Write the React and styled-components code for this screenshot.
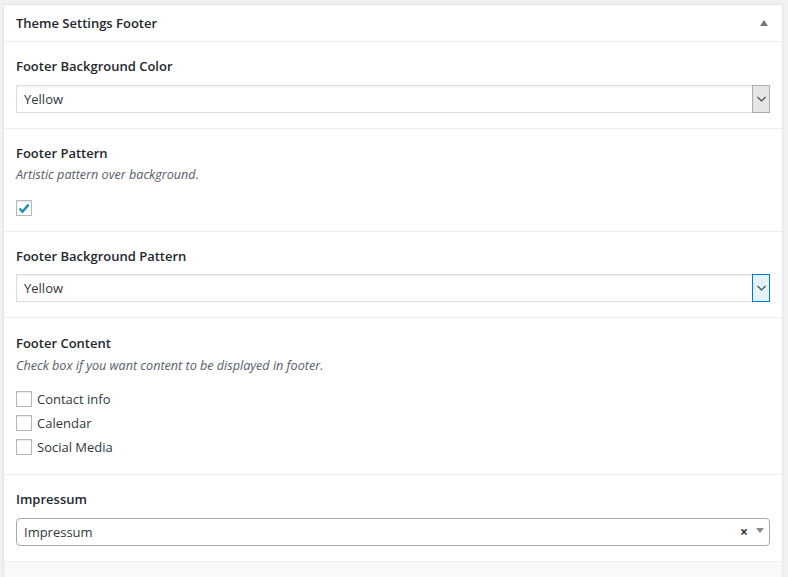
import React from "react";
import styled, { createGlobalStyle } from "styled-components";

const Global = createGlobalStyle`
  html, body { margin: 0; padding: 0; background: #f1f1f1; }
  body { font-family: "Open Sans", "Noto Sans", sans-serif; color: #23282d; }
  * { box-sizing: border-box; }
`;

const Page = styled.div`
  padding: 4px 5px 0 3px;
  height: 577px;
  overflow: hidden;
`;

const Panel = styled.div`
  background: #fff;
  border: 1px solid #e5e5e5;
  border-bottom: none;
  box-shadow: 0 1px 1px rgba(0,0,0,0.04);
`;

const Header = styled.div`
  height: 37px;
  display: flex;
  align-items: center;
  justify-content: space-between;
  padding: 0 14px 0 12px;
  border-bottom: 1px solid #eee;
`;

const Title = styled.h2`
  margin: 0;
  font-size: 13px;
  font-weight: 600;
  line-height: 20px;
  color: #23282d;
`;

const Toggle = styled.span`
  width: 0;
  height: 0;
  border-left: 4px solid transparent;
  border-right: 4px solid transparent;
  border-bottom: 6px solid #72777c;
`;

const Section = styled.div`
  padding: ${p => p.$pad || "14px 12px 15px 12px"};
  border-bottom: 1px solid #eee;
  display: flex;
  flex-direction: column;
`;

const Label = styled.div`
  font-size: 13px;
  font-weight: 600;
  line-height: 20px;
`;

const Desc = styled.div`
  font-size: 12.6px;
  font-style: italic;
  color: #555d66;
  line-height: 20px;
  margin-top: ${p => p.$mt || 2}px;
`;

const SelectBox = styled.div`
  margin-top: ${p => p.$mt || 9}px;
  height: 28px;
  border: 1px solid #ddd;
  box-shadow: inset 0 1px 2px rgba(0,0,0,0.07);
  display: flex;
  align-items: stretch;
  font-size: 13px;
`;

const SelectValue = styled.div`
  flex: 1;
  display: flex;
  align-items: center;
  padding-left: ${p => (p.$flush ? 0 : 7)}px;
  color: #32373c;
`;

const SelectButton = styled.div`
  width: 18px;
  margin: -1px -1px -1px 0;
  display: flex;
  align-items: center;
  justify-content: center;
  background: ${p => (p.$focus ? "#e5f1fb" : "#e6e6e6")};
  border: 1px solid ${p => (p.$focus ? "#0078d7" : "#adadad")};
`;

const Chevron = () => (
  <svg width="9" height="6" viewBox="0 0 9 6">
    <path d="M0.5 1 L4.5 5 L8.5 1" fill="none" stroke="#444" strokeWidth="1.1" />
  </svg>
);

const Box = styled.span`
  width: 16px;
  height: 16px;
  border: 1px solid #b4b9be;
  background: #fff;
  box-shadow: inset 0 1px 2px rgba(0,0,0,0.1);
  display: inline-flex;
  align-items: center;
  justify-content: center;
  flex: none;
`;

const Check = () => (
  <svg width="12" height="11" viewBox="0 0 12 11">
    <path d="M1.5 5.5 L4.5 8.8 L10.6 1.6" fill="none" stroke="#1e8cbe" strokeWidth="2.4" />
  </svg>
);

const CheckRow = styled.label`
  display: flex;
  align-items: center;
  gap: 5px;
  height: 24px;
  font-size: 13px;
  color: #32373c;
`;

const CheckList = styled.div`
  margin-top: ${p => p.$mt || 12}px;
  display: flex;
  flex-direction: column;
`;

const Select2 = styled.div`
  margin-top: 9px;
  height: 28px;
  border: 1px solid #aaa;
  border-radius: 4px;
  display: flex;
  align-items: center;
  padding: 0 5px 0 7px;
  font-size: 13px;
  color: #444;
`;

const Clear = styled.span`
  font-size: 14px;
  font-weight: 700;
  color: #333;
  margin-right: 8px;
  line-height: 1;
`;

const Caret = styled.span`
  width: 0;
  height: 0;
  border-left: 4px solid transparent;
  border-right: 4px solid transparent;
  border-top: 5px solid #888;
  margin-top: -4px;
`;

const Footer = styled.div`
  height: 20px;
  background: #f9f9f9;
`;

export default function App() {
  return (
    <Page>
      <Global />
      <Panel>
        <Header>
          <Title>Theme Settings Footer</Title>
          <Toggle />
        </Header>
        <Section>
          <Label>Footer Background Color</Label>
          <SelectBox>
            <SelectValue>Yellow</SelectValue>
            <SelectButton><Chevron /></SelectButton>
          </SelectBox>
        </Section>
        <Section $pad="14px 12px 11px 12px">
          <Label>Footer Pattern</Label>
          <Desc>Artistic pattern over background.</Desc>
          <CheckList $mt={11}>
            <CheckRow><Box><Check /></Box></CheckRow>
          </CheckList>
        </Section>
        <Section>
          <Label>Footer Background Pattern</Label>
          <SelectBox $mt={8}>
            <SelectValue>Yellow</SelectValue>
            <SelectButton $focus><Chevron /></SelectButton>
          </SelectBox>
        </Section>
        <Section $pad="15px 12px 15px 12px">
          <Label>Footer Content</Label>
          <Desc $mt={3}>Check box if you want content to be displayed in footer.</Desc>
          <CheckList $mt={11}>
            <CheckRow><Box />Contact info</CheckRow>
            <CheckRow><Box />Calendar</CheckRow>
            <CheckRow><Box />Social Media</CheckRow>
          </CheckList>
        </Section>
        <Section>
          <Label>Impressum</Label>
          <Select2>
            <SelectValue $flush>Impressum</SelectValue>
            <Clear>×</Clear>
            <Caret />
          </Select2>
        </Section>
        <Footer />
      </Panel>
    </Page>
  );
}
